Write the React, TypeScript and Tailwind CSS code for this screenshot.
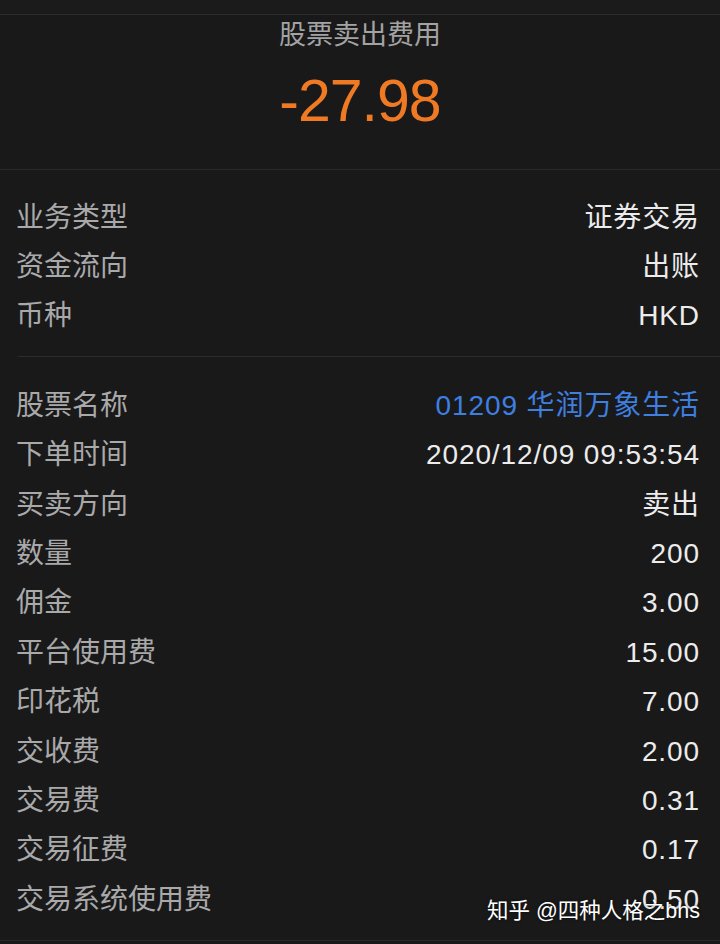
import React from "react";

const font = { fontFamily: '"Liberation Sans", "Noto Sans CJK SC", sans-serif' };

function Row({ label, value, blue }: { label: string; value: string; blue?: boolean }) {
  return (
    <div className="flex h-[49.4px] items-center justify-between pl-4 pr-[20px]">
      <span className="text-[28px] leading-none text-[#a9a9aa]">{label}</span>
      <span
        className={`text-[28px] leading-none tracking-[0.9px] ${blue ? "text-[#3f7fe0]" : "text-[#ececec]"}`}
      >
        {value}
      </span>
    </div>
  );
}

export default function App() {
  const s1: [string, string][] = [
    ["业务类型", "证券交易"],
    ["资金流向", "出账"],
    ["币种", "HKD"],
  ];
  const s2: [string, string, boolean?][] = [
    ["股票名称", "01209 华润万象生活", true],
    ["下单时间", "2020/12/09 09:53:54"],
    ["买卖方向", "卖出"],
    ["数量", "200"],
    ["佣金", "3.00"],
    ["平台使用费", "15.00"],
    ["印花税", "7.00"],
    ["交收费", "2.00"],
    ["交易费", "0.31"],
    ["交易征费", "0.17"],
    ["交易系统使用费", "0.50"],
  ];
  return (
    <div className="relative h-[944px] w-[720px] overflow-hidden bg-[#19191a]" style={font}>
      <div className="h-[15px] border-b border-[#2c2c2d] bg-[#1b1b1c]" />
      <div className="flex h-[155px] flex-col items-center border-b border-[#2a2a2b]">
        <div className="mt-[2px] text-[27px] leading-[36px] text-[#a3a3a4]">股票卖出费用</div>
        <div className="mt-[16px] text-[59px] leading-[64px] tracking-[-1px] text-[#f07a24]">-27.98</div>
      </div>
      <div className="pt-[23px] pb-[15px]">
        {s1.map(([l, v]) => (
          <Row key={l} label={l} value={v} />
        ))}
      </div>
      <div className="ml-[18px] h-px bg-[#2c2c2d]" />
      <div className="pt-[24px]">
        {s2.map(([l, v, b]) => (
          <Row key={l} label={l} value={v} blue={b} />
        ))}
      </div>
      <div className="absolute bottom-[3px] left-0 right-0 h-px bg-[#2a2a2b]" />
      <div className="absolute left-[487px] top-[897px] whitespace-nowrap text-[21.5px] leading-[28px] text-white [text-shadow:0_0_3px_rgba(0,0,0,0.6)]">
        知乎 @四种人格之bhs
      </div>
    </div>
  );
}
